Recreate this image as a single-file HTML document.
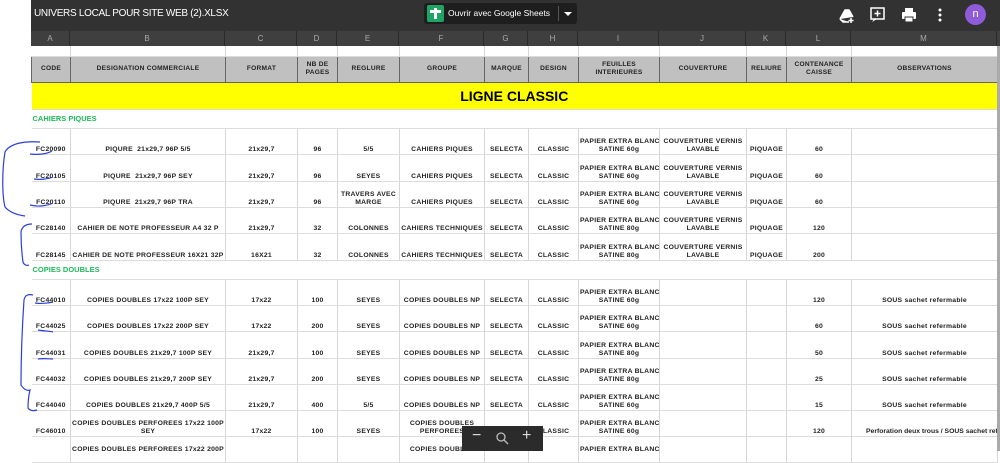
<!DOCTYPE html>
<html><head><meta charset="utf-8"><style>
*{margin:0;padding:0;box-sizing:border-box}
body{width:1000px;height:451px;overflow:hidden;background:#fff;font-family:"Liberation Sans",sans-serif;position:relative}
.top{position:absolute;left:31px;top:0;width:969px;height:31px;background:#323232}
.title{position:absolute;left:34px;top:8px;color:#fff;font-size:10px;letter-spacing:-0.3px}
.btn{position:absolute;left:424px;top:3px;width:153px;height:21px;background:#1e1e1e;border-radius:3px;color:#fff;font-size:8.5px}
.colh{position:absolute;left:31px;top:31px;width:969px;height:15px;background:#3f3f3f}
.colh div{position:absolute;top:0;height:15px;border-right:1px solid #2a2a2a;color:#aaa;font-size:8px;text-align:center;line-height:15px}
table{position:absolute;left:31px;top:46px;border-collapse:collapse;table-layout:fixed;width:966px}
td{border-right:1px solid #d6d6d6;border-bottom:1px solid #dcdcdc;font-size:6.8px;letter-spacing:0.25px;font-weight:bold;text-align:center;vertical-align:bottom;padding:0 1px 0;color:#222;line-height:8px;overflow:hidden;white-space:nowrap}
tr.h td{background:#c0c0c0;border:1px solid #666;vertical-align:middle;padding:0;font-size:6.6px}
tr.y td{background:#ffff00;font-size:14px;line-height:26px;vertical-align:middle;color:#000;padding:0;letter-spacing:0}
tr.s td{color:#1fba5a;text-align:left;font-size:7.5px;vertical-align:middle;padding-left:1px;letter-spacing:0}
.scroll{position:absolute;left:997px;top:46px;width:3px;height:405px;background:#aaa}
.zoom{position:absolute;left:462px;top:426px;width:81px;height:25px;background:#2b2b2b;color:#ddd;font-size:16px}
</style></head><body>
<div class="top"></div>
<div class="title">UNIVERS LOCAL POUR SITE WEB (2).XLSX</div>
<div class="btn"><div style="position:absolute;left:3px;top:2px;width:17px;height:17px;background:#1fa463;border-radius:2px"><div style="position:absolute;left:7px;top:3px;width:3px;height:11px;background:#fff"></div><div style="position:absolute;left:3px;top:5px;width:11px;height:3px;background:#fff"></div></div><span style="position:absolute;left:24px;top:5px">Ouvrir avec Google Sheets</span><div style="position:absolute;left:134px;top:3px;width:1px;height:15px;background:#555"></div><div style="position:absolute;left:140px;top:9px;border-left:4px solid transparent;border-right:4px solid transparent;border-top:4px solid #fff"></div></div>
<svg style="position:absolute;left:836px;top:5px" width="120" height="20" viewBox="0 0 120 20">
<path d="M4 14 L9 5 L13 5 L17 12 M4 14 L7 17 L13 17" fill="#fff" stroke="#fff" stroke-width="1.5"/><path d="M15 13v5M12.5 15.5h5" stroke="#fff" stroke-width="1.5"/>
<rect x="35" y="3" width="13" height="11" fill="none" stroke="#fff" stroke-width="1.5"/><path d="M38 14 L36 17 L41 14" fill="#fff"/><path d="M41.5 5.5v6M38.5 8.5h6" stroke="#fff" stroke-width="1.5"/>
<rect x="66" y="7" width="14" height="7" rx="1" fill="#fff"/><rect x="69" y="3" width="8" height="4" fill="#fff"/><rect x="69" y="12" width="8" height="5" fill="#fff" stroke="#323232"/>
<circle cx="104" cy="5" r="1.5" fill="#fff"/><circle cx="104" cy="10" r="1.5" fill="#fff"/><circle cx="104" cy="15" r="1.5" fill="#fff"/>
</svg>
<div style="position:absolute;left:965px;top:4px;width:21px;height:21px;border-radius:50%;background:#8e5cd9;color:#fff;font-size:11px;text-align:center;line-height:20px">n</div>
<div class="colh">
<div style="left:0;width:39px">A</div><div style="left:39px;width:155px">B</div><div style="left:194px;width:72px">C</div><div style="left:266px;width:40px">D</div><div style="left:306px;width:62px">E</div><div style="left:368px;width:85px">F</div><div style="left:453px;width:44px">G</div><div style="left:497px;width:50px">H</div><div style="left:547px;width:81px">I</div><div style="left:628px;width:87px">J</div><div style="left:715px;width:40px">K</div><div style="left:755px;width:65px">L</div><div style="left:820px;width:146px">M</div>
</div>
<table>
<colgroup><col style="width:39px"><col style="width:155px"><col style="width:72px"><col style="width:40px"><col style="width:62px"><col style="width:85px"><col style="width:44px"><col style="width:50px"><col style="width:81px"><col style="width:87px"><col style="width:40px"><col style="width:65px"><col style="width:146px"></colgroup>
<tr style="height:10px"><td></td><td></td><td></td><td></td><td></td><td></td><td></td><td></td><td></td><td></td><td></td><td></td><td></td></tr>
<tr class="h" style="height:26px"><td>CODE</td><td>DESIGNATION COMMERCIALE</td><td>FORMAT</td><td>NB DE<br>PAGES</td><td>REGLURE</td><td>GROUPE</td><td>MARQUE</td><td>DESIGN</td><td>FEUILLES<br>INTERIEURES</td><td>COUVERTURE</td><td>RELIURE</td><td>CONTENANCE<br>CAISSE</td><td>OBSERVATIONS</td></tr>
<tr class="y" style="height:26px"><td colspan="13">LIGNE CLASSIC</td></tr>
<tr class="s" style="height:19px"><td colspan="13">CAHIERS PIQUES</td></tr>
<tr style="height:26px"><td>FC20090</td><td>PIQURE&nbsp; 21x29,7 96P 5/5</td><td>21x29,7</td><td>96</td><td>5/5</td><td>CAHIERS PIQUES</td><td>SELECTA</td><td>CLASSIC</td><td>PAPIER EXTRA BLANC<br>SATINE 60g</td><td>COUVERTURE VERNIS<br>LAVABLE</td><td>PIQUAGE</td><td>60</td><td></td></tr>
<tr style="height:27px"><td>FC20105</td><td>PIQURE&nbsp; 21x29,7 96P SEY</td><td>21x29,7</td><td>96</td><td>SEYES</td><td>CAHIERS PIQUES</td><td>SELECTA</td><td>CLASSIC</td><td>PAPIER EXTRA BLANC<br>SATINE 60g</td><td>COUVERTURE VERNIS<br>LAVABLE</td><td>PIQUAGE</td><td>60</td><td></td></tr>
<tr style="height:26px"><td>FC20110</td><td>PIQURE&nbsp; 21x29,7 96P TRA</td><td>21x29,7</td><td>96</td><td>TRAVERS AVEC<br>MARGE</td><td>CAHIERS PIQUES</td><td>SELECTA</td><td>CLASSIC</td><td>PAPIER EXTRA BLANC<br>SATINE 60g</td><td>COUVERTURE VERNIS<br>LAVABLE</td><td>PIQUAGE</td><td>60</td><td></td></tr>
<tr style="height:26px"><td>FC28140</td><td>CAHIER DE NOTE PROFESSEUR A4 32 P</td><td>21x29,7</td><td>32</td><td>COLONNES</td><td>CAHIERS TECHNIQUES</td><td>SELECTA</td><td>CLASSIC</td><td>PAPIER EXTRA BLANC<br>SATINE 80g</td><td>COUVERTURE VERNIS<br>LAVABLE</td><td>PIQUAGE</td><td>120</td><td></td></tr>
<tr style="height:27px"><td>FC28145</td><td>CAHIER DE NOTE PROFESSEUR 16X21 32P</td><td>16X21</td><td>32</td><td>COLONNES</td><td>CAHIERS TECHNIQUES</td><td>SELECTA</td><td>CLASSIC</td><td>PAPIER EXTRA BLANC<br>SATINE 80g</td><td>COUVERTURE VERNIS<br>LAVABLE</td><td>PIQUAGE</td><td>200</td><td></td></tr>
<tr class="s" style="height:19px"><td colspan="13">COPIES DOUBLES</td></tr>
<tr style="height:26px"><td>FC44010</td><td>COPIES DOUBLES 17x22 100P SEY</td><td>17x22</td><td>100</td><td>SEYES</td><td>COPIES DOUBLES NP</td><td>SELECTA</td><td>CLASSIC</td><td>PAPIER EXTRA BLANC<br>SATINE 60g</td><td></td><td></td><td>120</td><td>SOUS sachet refermable</td></tr>
<tr style="height:26px"><td>FC44025</td><td>COPIES DOUBLES 17x22 200P SEY</td><td>17x22</td><td>200</td><td>SEYES</td><td>COPIES DOUBLES NP</td><td>SELECTA</td><td>CLASSIC</td><td>PAPIER EXTRA BLANC<br>SATINE 60g</td><td></td><td></td><td>60</td><td>SOUS sachet refermable</td></tr>
<tr style="height:27px"><td>FC44031</td><td>COPIES DOUBLES 21x29,7 100P SEY</td><td>21x29,7</td><td>100</td><td>SEYES</td><td>COPIES DOUBLES NP</td><td>SELECTA</td><td>CLASSIC</td><td>PAPIER EXTRA BLANC<br>SATINE 80g</td><td></td><td></td><td>50</td><td>SOUS sachet refermable</td></tr>
<tr style="height:26px"><td>FC44032</td><td>COPIES DOUBLES 21x29,7 200P SEY</td><td>21x29,7</td><td>200</td><td>SEYES</td><td>COPIES DOUBLES NP</td><td>SELECTA</td><td>CLASSIC</td><td>PAPIER EXTRA BLANC<br>SATINE 80g</td><td></td><td></td><td>25</td><td>SOUS sachet refermable</td></tr>
<tr style="height:26px"><td>FC44040</td><td>COPIES DOUBLES 21x29,7 400P 5/5</td><td>21x29,7</td><td>400</td><td>5/5</td><td>COPIES DOUBLES NP</td><td>SELECTA</td><td>CLASSIC</td><td>PAPIER EXTRA BLANC<br>SATINE 60g</td><td></td><td></td><td>15</td><td>SOUS sachet refermable</td></tr>
<tr style="height:26px"><td>FC46010</td><td>COPIES DOUBLES PERFOREES 17x22 100P<br>SEY</td><td>17x22</td><td>100</td><td>SEYES</td><td>COPIES DOUBLES<br>PERFOREES</td><td>SELECTA</td><td>CLASSIC</td><td>PAPIER EXTRA BLANC<br>SATINE 60g</td><td></td><td></td><td>120</td><td style="text-align:left;padding-left:14px;letter-spacing:0">Perforation deux trous / SOUS sachet refermable</td></tr>
<tr style="height:26px"><td></td><td style="vertical-align:top;padding-top:9px">COPIES DOUBLES PERFOREES 17x22 200P</td><td></td><td></td><td></td><td style="vertical-align:top;padding-top:9px">COPIES DOUBLES</td><td></td><td></td><td style="vertical-align:top;padding-top:9px">PAPIER EXTRA BLANC</td><td></td><td></td><td></td><td></td></tr>
</table>
<div class="scroll"></div>
<div class="zoom"><span style="position:absolute;left:10px;top:1px">−</span><svg style="position:absolute;left:34px;top:6px" width="13" height="13"><circle cx="5" cy="5" r="4" fill="none" stroke="#bbb" stroke-width="1.3"/><path d="M8 8l4 4" stroke="#bbb" stroke-width="1.3"/></svg><span style="position:absolute;left:60px;top:1px">+</span></div>
<svg style="position:absolute;left:0;top:0" width="60" height="451" fill="none" stroke="#2b3fd6" stroke-width="1.2">
<path d="M40 142 C25 141 10 143 5 152 C2 170 2 195 5 207 C10 213 18 215 25 216"/>
<path d="M30 154 C38 155 47 154 52 151"/><path d="M34 179 C40 180 48 179 53 177"/><path d="M30 205 C38 207 47 206 53 203"/>
<path d="M32 224 C26 224 22 226 21 232 C21 245 22 255 23 262 C24 265 27 266 29 265"/>
<path d="M33 295 C28 294 25 295 24 300 C22 330 21 360 21 385 C24 390 28 391 30 390 C28 398 28 405 28 408 C30 411 34 411 37 410"/>
<path d="M35 303 C42 304 49 303 53 302"/><path d="M38 330 C44 331 49 331 53 332"/><path d="M38 359 C44 358 49 359 53 359"/>
</svg>
</body></html>
